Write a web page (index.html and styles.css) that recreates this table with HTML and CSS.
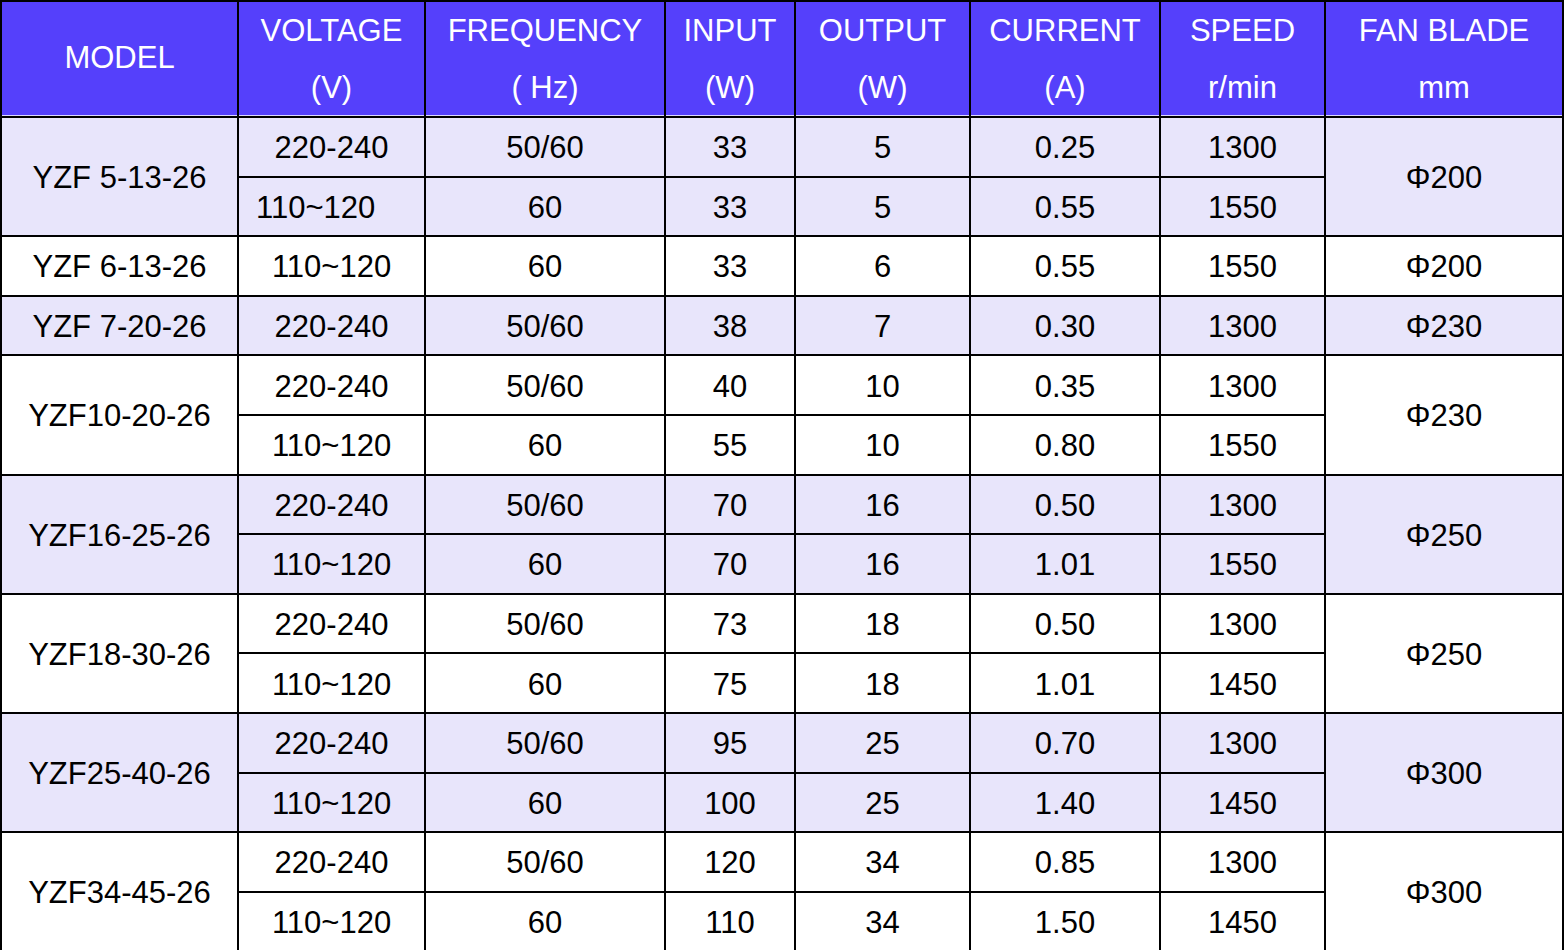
FILE: index.html
```html
<!DOCTYPE html>
<html lang="en">
<head>
<meta charset="utf-8">
<title>Fan motor specifications</title>
<link rel="stylesheet" href="styles.css">
</head>
<body>
<table class="spec">
  <thead>
    <tr>
      <th class="c-model">MODEL</th>
      <th class="c-volt">VOLTAGE<br>(V)</th>
      <th class="c-freq">FREQUENCY<br>( Hz)</th>
      <th class="c-in">INPUT<br>(W)</th>
      <th class="c-out">OUTPUT<br>(W)</th>
      <th class="c-cur">CURRENT<br>(A)</th>
      <th class="c-spd">SPEED<br>r/min</th>
      <th class="c-fan">FAN BLADE<br>mm</th>
    </tr>
  </thead>
  <tbody>
    <tr class="shade">
      <td rowspan="2">YZF 5-13-26</td>
      <td>220-240</td><td>50/60</td><td>33</td><td>5</td><td>0.25</td><td>1300</td>
      <td rowspan="2">Φ200</td>
    </tr>
    <tr class="shade">
      <td class="left">110~120</td><td>60</td><td>33</td><td>5</td><td>0.55</td><td>1550</td>
    </tr>
    <tr class="plain">
      <td>YZF 6-13-26</td>
      <td>110~120</td><td>60</td><td>33</td><td>6</td><td>0.55</td><td>1550</td>
      <td>Φ200</td>
    </tr>
    <tr class="shade">
      <td>YZF 7-20-26</td>
      <td>220-240</td><td>50/60</td><td>38</td><td>7</td><td>0.30</td><td>1300</td>
      <td>Φ230</td>
    </tr>
    <tr class="plain">
      <td rowspan="2">YZF10-20-26</td>
      <td>220-240</td><td>50/60</td><td>40</td><td>10</td><td>0.35</td><td>1300</td>
      <td rowspan="2">Φ230</td>
    </tr>
    <tr class="plain">
      <td>110~120</td><td>60</td><td>55</td><td>10</td><td>0.80</td><td>1550</td>
    </tr>
    <tr class="shade">
      <td rowspan="2">YZF16-25-26</td>
      <td>220-240</td><td>50/60</td><td>70</td><td>16</td><td>0.50</td><td>1300</td>
      <td rowspan="2">Φ250</td>
    </tr>
    <tr class="shade">
      <td>110~120</td><td>60</td><td>70</td><td>16</td><td>1.01</td><td>1550</td>
    </tr>
    <tr class="plain">
      <td rowspan="2">YZF18-30-26</td>
      <td>220-240</td><td>50/60</td><td>73</td><td>18</td><td>0.50</td><td>1300</td>
      <td rowspan="2">Φ250</td>
    </tr>
    <tr class="plain">
      <td>110~120</td><td>60</td><td>75</td><td>18</td><td>1.01</td><td>1450</td>
    </tr>
    <tr class="shade">
      <td rowspan="2">YZF25-40-26</td>
      <td>220-240</td><td>50/60</td><td>95</td><td>25</td><td>0.70</td><td>1300</td>
      <td rowspan="2">Φ300</td>
    </tr>
    <tr class="shade">
      <td>110~120</td><td>60</td><td>100</td><td>25</td><td>1.40</td><td>1450</td>
    </tr>
    <tr class="plain">
      <td rowspan="2">YZF34-45-26</td>
      <td>220-240</td><td>50/60</td><td>120</td><td>34</td><td>0.85</td><td>1300</td>
      <td rowspan="2">Φ300</td>
    </tr>
    <tr class="plain">
      <td>110~120</td><td>60</td><td>110</td><td>34</td><td>1.50</td><td>1450</td>
    </tr>
  </tbody>
</table>
</body>
</html>
```

FILE: styles.css
```css
html, body {
  margin: 0;
  padding: 0;
  background: #ffffff;
  overflow: hidden;
}

.spec {
  table-layout: fixed;
  width: 1564px;
  border-collapse: separate;
  border-spacing: 0;
  border-top: 2px solid #000;
  border-left: 2px solid #000;
  font-family: "Liberation Sans", Arial, sans-serif;
  font-size: 31px;
  color: #000000;
}

.spec th,
.spec td {
  box-sizing: border-box;
  padding: 0;
  text-align: center;
  vertical-align: middle;
  border-right: 2px solid #000;
  border-bottom: 2px solid #000;
  white-space: nowrap;
}

.spec th {
  height: 116px;
  background: #5540fb;
  color: #ffffff;
  font-weight: normal;
  line-height: 57px;
  box-shadow: inset 0 -1px 0 #dcd8ff;
}

.spec th.c-model {
  padding-bottom: 3px;
}

.c-model { width: 237px; }
.c-volt  { width: 187px; }
.c-freq  { width: 240px; }
.c-in    { width: 130px; }
.c-out   { width: 175px; }
.c-cur   { width: 190px; }
.c-spd   { width: 165px; }
.c-fan   { width: 238px; }

.spec td {
  height: 59.6px;
  line-height: 36px;
  padding-top: 3px;
}

.shade td {
  background: #e8e5fb;
}

.plain td {
  background: #ffffff;
}

.spec td.left {
  text-align: left;
  padding-left: 17px;
}
```
